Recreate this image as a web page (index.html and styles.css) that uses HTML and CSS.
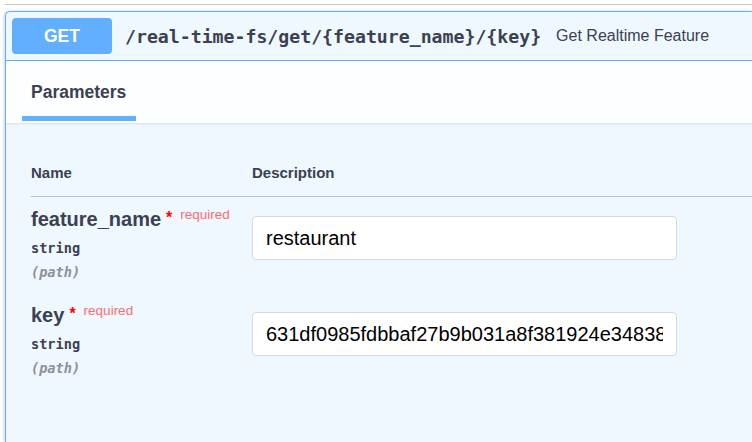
FILE: index.html
```html
<!DOCTYPE html>
<html>
<head>
<meta charset="utf-8">
<link rel="stylesheet" href="styles.css">
</head>
<body>
<div class="topline"></div>
<div class="opblock">
  <div class="summary">
    <span class="method">GET</span>
    <span class="path">/real-time-fs/get/{feature_name}/{key}</span>
    <span class="desc">Get Realtime Feature</span>
  </div>
  <div class="section-header">
    <div class="tab">Parameters</div>
  </div>
  <div class="params">
    <div class="head-row">
      <div class="col-name">Name</div>
      <div class="col-desc">Description</div>
    </div>
    <div class="param-row">
      <div class="col-name">
        <div class="pname">feature_name<span class="star">*</span><span class="req">required</span></div>
        <div class="ptype">string</div>
        <div class="pin">(path)</div>
      </div>
      <div class="col-desc">
        <input class="field" type="text" value="restaurant">
      </div>
    </div>
    <div class="param-row">
      <div class="col-name">
        <div class="pname">key<span class="star">*</span><span class="req">required</span></div>
        <div class="ptype">string</div>
        <div class="pin">(path)</div>
      </div>
      <div class="col-desc">
        <input class="field" type="text" value="631df0985fdbbaf27b9b031a8f381924e348381b2c7d">
      </div>
    </div>
  </div>
</div>
</body>
</html>
```

FILE: styles.css
```css
html, body {
  margin: 0;
  padding: 0;
  background: #ffffff;
  overflow: hidden;
  width: 752px;
  height: 442px;
}
body {
  font-family: "Liberation Sans", Arial, sans-serif;
  color: #3b4151;
}
.topline {
  margin: 4px 0 0 5px;
  height: 1px;
  background: #c9c9c9;
}
.opblock {
  margin: 6px 0 0 5px;
  height: 431px;
  box-sizing: border-box;
  border: 1px solid #61affe;
  border-right: none;
  border-bottom: none;
  border-radius: 5px 0 0 0;
  background: #eff7ff;
  box-shadow: -1px 0 3px rgba(0, 0, 0, 0.19);
  overflow: hidden;
}
.summary {
  display: flex;
  align-items: center;
  height: 48px;
  padding-left: 6px;
  border-bottom: 1px solid #61affe;
  white-space: nowrap;
}
.method {
  display: flex;
  align-items: center;
  justify-content: center;
  width: 100px;
  height: 36px;
  border-radius: 4px;
  background: #61affe;
  color: #ffffff;
  font-weight: bold;
  font-size: 17.5px;
  flex: none;
}
.path {
  margin-left: 13px;
  font-family: "DejaVu Sans Mono", monospace;
  font-weight: bold;
  font-size: 18.2px;
  color: #3b4151;
}
.desc {
  margin-left: 15px;
  font-size: 16px;
  color: #3b4151;
}
.section-header {
  height: 62px;
  background: rgba(255, 255, 255, 0.8);
  box-shadow: 0 1px 2px rgba(0, 0, 0, 0.1);
  padding-left: 16px;
  display: flex;
  align-items: flex-end;
  padding-bottom: 2px;
  box-sizing: border-box;
}
.tab {
  width: 114px;
  box-sizing: border-box;
  padding-left: 9px;
  font-size: 17.5px;
  font-weight: bold;
  line-height: 20px;
  padding-bottom: 14px;
  border-bottom: 5px solid #61affe;
}
.params {
  padding-left: 25px;
}
.head-row {
  display: flex;
  margin-top: 41px;
  font-size: 15px;
  font-weight: bold;
  line-height: 18px;
  padding-bottom: 14px;
  border-bottom: 1px solid #b8c0cc;
}
.col-name {
  width: 221px;
  flex: none;
}
.col-desc {
  flex: none;
}
.param-row {
  display: flex;
  height: 96px;
}
.param-row .col-name {
  padding-top: 10px;
}
.pname {
  font-size: 20px;
  font-weight: bold;
  line-height: 24px;
  white-space: nowrap;
}
.star {
  color: #ff0000;
  font-size: 16px;
  margin-left: 5px;
  position: relative;
  top: -3px;
}
.req {
  color: #ff6a70;
  font-size: 13.5px;
  font-weight: normal;
  margin-left: 8px;
  position: relative;
  top: -7px;
}
.ptype {
  font-family: "DejaVu Sans Mono", monospace;
  font-weight: bold;
  font-size: 13.6px;
  line-height: 24px;
  margin-top: 2px;
}
.pin {
  font-family: "DejaVu Sans Mono", monospace;
  font-style: italic;
  font-weight: bold;
  font-size: 13.6px;
  line-height: 24px;
  color: #8c9098;
}
.field {
  display: block;
  margin-top: 19px;
  width: 425px;
  height: 44px;
  box-sizing: border-box;
  border: 1px solid #d9d9d9;
  border-radius: 4px;
  background: #ffffff;
  padding: 0 13px;
  font-family: "Liberation Sans", Arial, sans-serif;
  font-size: 20px;
  color: #000000;
  outline: none;
}
```
